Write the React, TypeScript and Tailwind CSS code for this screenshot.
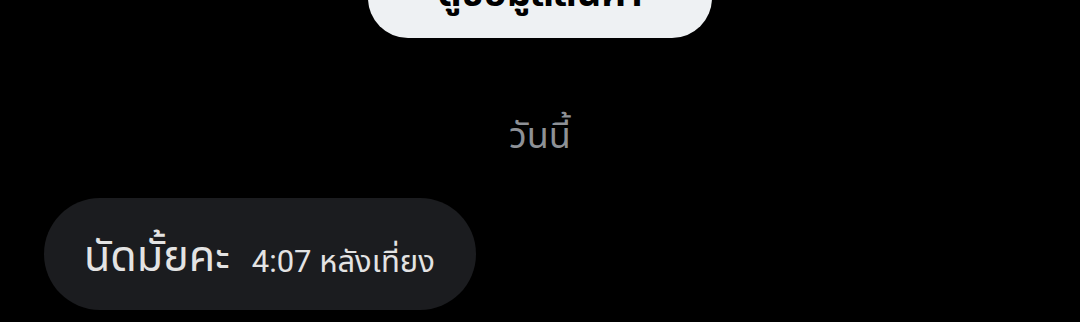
const App = () => {
  return (
    <div
      className="h-[322px] w-[1080px] overflow-hidden bg-black"
      style={{ fontFamily: "Roboto, 'Noto Sans', 'Noto Sans Thai', sans-serif" }}
    >
      <div className="flex justify-center">
        <div className="-mt-[42px] flex h-[80px] w-[344px] items-start justify-center rounded-[40px] bg-[#eef1f3] pt-[13px]">
          <span className="text-[38px] font-bold leading-[44px] text-black">
            ดูข้อมูลสินค้า
          </span>
        </div>
      </div>

      <div className="mt-[76px] flex justify-center">
        <span className="text-[36px] leading-[44px] text-[#8e9196]">วันนี้</span>
      </div>

      <div className="mt-[40px] pl-[44px]">
        <div className="flex h-[112px] w-[432px] items-center rounded-[56px] bg-[#1b1c1f] pl-[40px]">
          <span className="mt-[3px] text-[43px] leading-[48px] text-[#e3e3e3]">นัดมั้ยคะ</span>
          <span className="ml-[22px] mt-[16px] text-[31px] leading-[38px] text-[#e3e3e3]">
            4:07 หลังเที่ยง
          </span>
        </div>
      </div>
    </div>
  );
};

export default App;
